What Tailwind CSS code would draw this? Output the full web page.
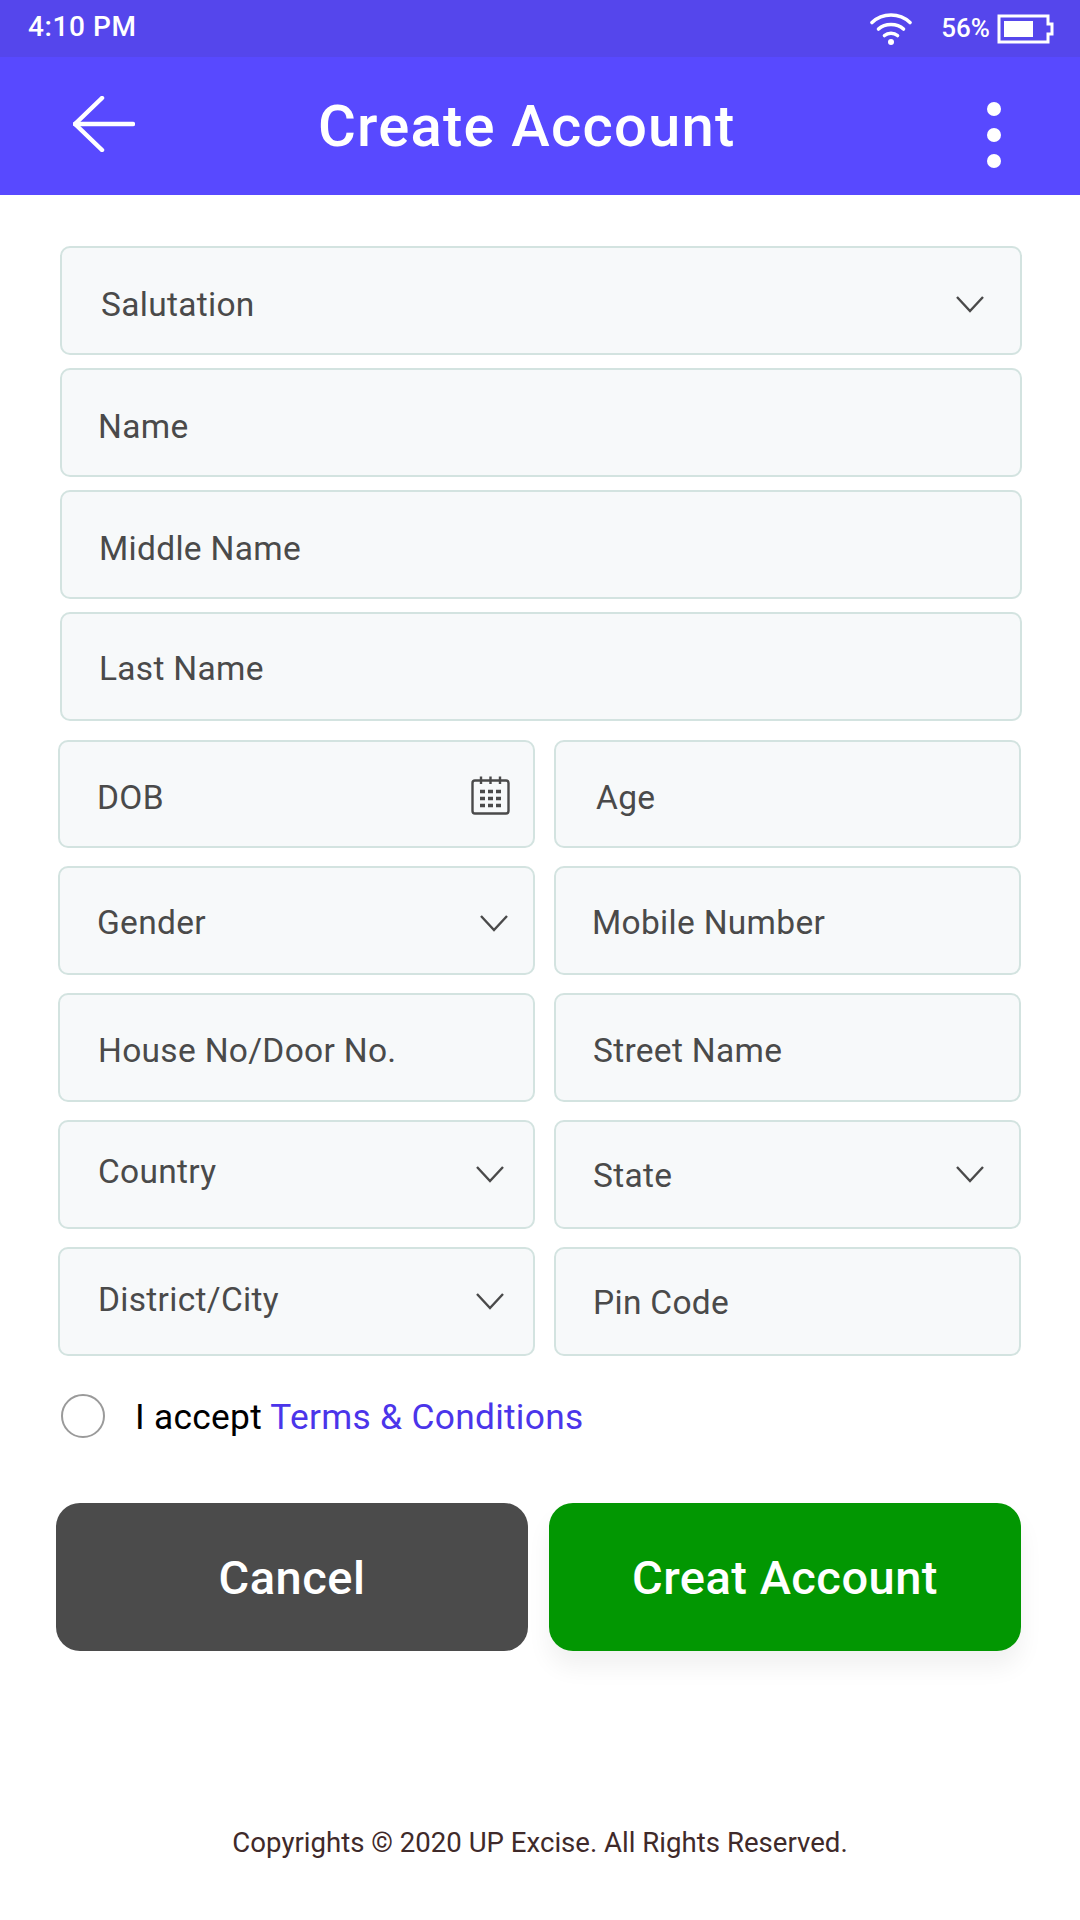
<!DOCTYPE html>
<html>
<head>
<meta charset="utf-8">
<title>Create Account</title>
<script src="https://cdn.jsdelivr.net/npm/@tailwindcss/browser@4"></script>
</head>
<body class="bg-white font-['Roboto',sans-serif] w-[1080px] h-[1920px] overflow-hidden">

<!-- status bar -->
<div class="h-[57px] bg-[#5546ec] text-white flex items-center pl-[28px] pr-[26px]">
    <span class="text-[28px] font-medium tracking-[0.6px] mb-[3px]">4:10 PM</span>
    <div class="ml-auto flex items-center">
        <svg class="w-[42px] h-[36px]" viewBox="0 0 42 36" fill="none" stroke="white" stroke-width="3.6" stroke-linecap="round">
            <path d="M2 11.5C12.5 1.5 29.5 1.5 40 11.5"/>
            <path d="M8.5 18C15 12 27 12 33.5 18"/>
            <path d="M14.5 24.5C18 21.5 24 21.5 27.5 24.5"/>
            <circle cx="21" cy="31" r="3" fill="white" stroke="none"/>
        </svg>
        <span class="ml-[29px] text-[26px] font-medium">56%</span>
        <svg class="ml-[7px] w-[57px] h-[30px]" viewBox="0 0 57 30" fill="none">
            <path d="M2 2H51V10H55V20H51V28H2Z" stroke="white" stroke-width="3"/>
            <rect x="7" y="7" width="29" height="16" fill="white"/>
        </svg>
    </div>
</div>

<!-- header -->
<div class="h-[138px] bg-[#5849ff] text-white relative flex items-center">
    <svg class="ml-[73px] mt-[-4px] w-[62px] h-[56px]" viewBox="0 0 62 56" fill="none" stroke="white" stroke-width="4.5" stroke-linecap="round" stroke-linejoin="round">
        <path d="M29 2L2 28L29 54"/>
        <path d="M2 28H60"/>
    </svg>
    <h1 class="ml-[183px] mt-[-1px] text-[58px] font-medium tracking-[1.2px] leading-none">Create Account</h1>
    <div class="absolute left-[987px] top-[45px] flex flex-col gap-[12px]">
        <span class="block w-[14px] h-[14px] rounded-full bg-white"></span>
        <span class="block w-[14px] h-[14px] rounded-full bg-white"></span>
        <span class="block w-[14px] h-[14px] rounded-full bg-white"></span>
    </div>
</div>

<!-- form -->
<div class="pt-[51px] text-[33.5px] tracking-[0.3px] text-[#4a4a4a]">
    <div class="ml-[60px] w-[962px] flex flex-col gap-[13px]">
        <div class="h-[109px] pl-[39px] pr-[36px] pt-[10px] rounded-[10px] border-2 border-[#d3e3e0] bg-[#f7f9fa] flex items-center justify-between">
            <span>Salutation</span>
            <svg class="w-[28px] h-[17px] mb-[2px]" viewBox="0 0 28 17" fill="none" stroke="#4a4a4a" stroke-width="2.4"><path d="M1 1L14 15L27 1"/></svg>
        </div>
        <div class="h-[109px] pl-[36px] pt-[9px] rounded-[10px] border-2 border-[#d3e3e0] bg-[#f7f9fa] flex items-center">Name</div>
        <div class="h-[109px] pl-[37px] pt-[9px] rounded-[10px] border-2 border-[#d3e3e0] bg-[#f7f9fa] flex items-center">Middle Name</div>
        <div class="h-[109px] pl-[37px] pt-[5px] rounded-[10px] border-2 border-[#d3e3e0] bg-[#f7f9fa] flex items-center">Last Name</div>
    </div>

    <div class="mt-[19px] ml-[58px] w-[963px] grid grid-cols-[477px_467px] gap-x-[19px] gap-y-[18px]">
        <div class="h-[108px] pl-[37px] pr-[23px] pt-[8px] rounded-[10px] border-2 border-[#d3e3e0] bg-[#f7f9fa] flex items-center justify-between">
            <span>DOB</span>
            <svg class="w-[39px] h-[39px] mt-[-6px]" viewBox="0 0 39 39" fill="none" stroke="#4a4a4a" stroke-width="2.4">
                <rect x="1.5" y="4.5" width="36" height="33" rx="2.5"/>
                <path d="M10 0.5V8M19.5 0.5V8M29 0.5V8"/>
                <path d="M9 15.5h5M17 15.5h5M25 15.5h5M9 22.5h5M17 22.5h5M25 22.5h5M9 29.5h5M17 29.5h5M25 29.5h5" stroke-width="3.4"/>
            </svg>
        </div>
        <div class="h-[108px] pl-[40px] pt-[8px] rounded-[10px] border-2 border-[#d3e3e0] bg-[#f7f9fa] flex items-center">Age</div>

        <div class="h-[109px] pl-[37px] pr-[25px] pt-[5px] rounded-[10px] border-2 border-[#d3e3e0] bg-[#f7f9fa] flex items-center justify-between">
            <span>Gender</span>
            <svg class="w-[28px] h-[17px]" viewBox="0 0 28 17" fill="none" stroke="#4a4a4a" stroke-width="2.4"><path d="M1 1L14 15L27 1"/></svg>
        </div>
        <div class="h-[109px] pl-[36px] pt-[5px] rounded-[10px] border-2 border-[#d3e3e0] bg-[#f7f9fa] flex items-center">Mobile Number</div>

        <div class="h-[109px] pl-[38px] pt-[8px] rounded-[10px] border-2 border-[#d3e3e0] bg-[#f7f9fa] flex items-center">House No/Door No.</div>
        <div class="h-[109px] pl-[37px] pt-[8px] rounded-[10px] border-2 border-[#d3e3e0] bg-[#f7f9fa] flex items-center">Street Name</div>

        <div class="h-[109px] pl-[38px] pr-[29px] rounded-[10px] border-2 border-[#d3e3e0] bg-[#f7f9fa] flex items-center justify-between">
            <span class="mb-[5px]">Country</span>
            <svg class="w-[28px] h-[17px]" viewBox="0 0 28 17" fill="none" stroke="#4a4a4a" stroke-width="2.4"><path d="M1 1L14 15L27 1"/></svg>
        </div>
        <div class="h-[109px] pl-[37px] pr-[35px] rounded-[10px] border-2 border-[#d3e3e0] bg-[#f7f9fa] flex items-center justify-between">
            <span class="mt-[3px]">State</span>
            <svg class="w-[28px] h-[17px]" viewBox="0 0 28 17" fill="none" stroke="#4a4a4a" stroke-width="2.4"><path d="M1 1L14 15L27 1"/></svg>
        </div>

        <div class="h-[109px] pl-[38px] pr-[29px] rounded-[10px] border-2 border-[#d3e3e0] bg-[#f7f9fa] flex items-center justify-between">
            <span class="mb-[3px]">District/City</span>
            <svg class="w-[28px] h-[17px]" viewBox="0 0 28 17" fill="none" stroke="#4a4a4a" stroke-width="2.4"><path d="M1 1L14 15L27 1"/></svg>
        </div>
        <div class="h-[109px] pl-[37px] pt-[4px] rounded-[10px] border-2 border-[#d3e3e0] bg-[#f7f9fa] flex items-center">Pin Code</div>
    </div>

    <!-- terms -->
    <div class="mt-[38px] ml-[61px] flex items-center h-[44px]">
        <span class="block w-[44px] h-[44px] rounded-full border-2 border-[#9a9a9a]"></span>
        <span class="ml-[30px] mt-[3px] text-black text-[35.3px] tracking-[0.3px]">I accept <span class="text-[#4b35ea]">Terms &amp; Conditions</span></span>
    </div>

    <!-- buttons -->
    <div class="mt-[65px] ml-[56px] flex gap-[21px] text-white text-[47px] font-medium tracking-[0.5px]">
        <button class="w-[472px] h-[148px] pt-[3px] rounded-[24px] bg-[#4b4b4b]">Cancel</button>
        <button class="w-[472px] h-[148px] pt-[3px] rounded-[24px] bg-[#029702] shadow-[0_16px_24px_rgba(0,0,0,0.06)]">Creat Account</button>
    </div>

    <p class="mt-[171px] text-center text-[27.6px] tracking-normal text-[#3f2a2a]">Copyrights © 2020 UP Excise. All Rights Reserved.</p>
</div>

</body>
</html>
